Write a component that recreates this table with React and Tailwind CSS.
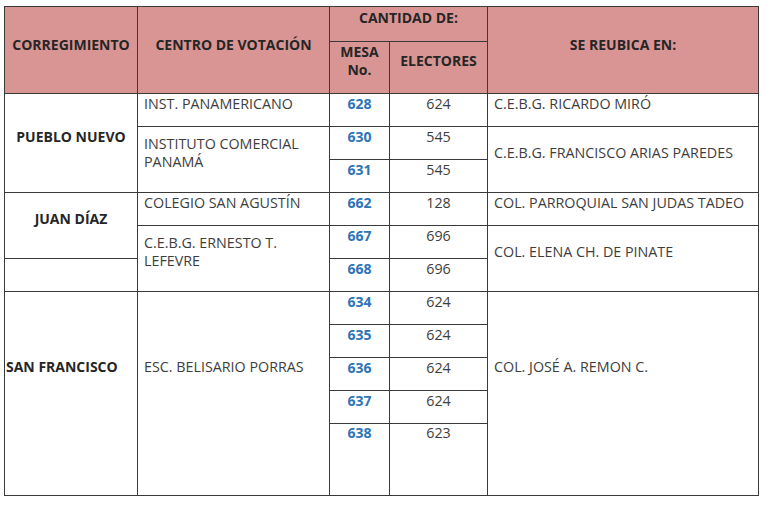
import React from 'react';

const line = "border border-[#3a3a3a]";
const head = `${line} bg-[#d99594] text-[#262626] font-bold text-[14px] text-center align-middle`;
const cell = `${line} align-middle pb-[13px] leading-[18px]`;
const mesa = `${cell} text-center font-bold text-[#2e74b5] text-[14px]`;
const elect = `${cell} text-center`;
const left = `${cell} pl-[6px] pr-[4px]`;

const sanFrancisco = [
  { mesa: 634, electores: 624 },
  { mesa: 635, electores: 624 },
  { mesa: 636, electores: 624 },
  { mesa: 637, electores: 624 },
  { mesa: 638, electores: 623 },
];

export default function App() {
  return (
    <div className="bg-white w-[780px] h-[511px] pt-[6px] pl-[4px] text-[14.3px] text-[#3d3d3d]" style={{ fontFamily: '"Open Sans", "Liberation Sans", sans-serif' }}>
      <table className="border-collapse table-fixed w-[754px]">
        <colgroup>
          <col className="w-[133px]" />
          <col className="w-[192px]" />
          <col className="w-[60px]" />
          <col className="w-[98px]" />
          <col className="w-[271px]" />
        </colgroup>
        <thead>
          <tr className="h-[35px]">
            <th rowSpan={2} className={`${head} pb-[11px]`}>CORREGIMIENTO</th>
            <th rowSpan={2} className={`${head} pb-[11px]`}>CENTRO DE VOTACIÓN</th>
            <th colSpan={2} className={`${head} pb-[13px]`}>CANTIDAD DE:</th>
            <th rowSpan={2} className={`${head} pb-[11px]`}>SE REUBICA EN:</th>
          </tr>
          <tr className="h-[52px]">
            <th className={`${head} pb-[14px] leading-[18px]`}>MESA<br />No.</th>
            <th className={`${head} pb-[14px]`}>ELECTORES</th>
          </tr>
        </thead>
        <tbody>
          <tr className="h-[33px]">
            <td rowSpan={3} className={`${cell} text-center font-bold text-[14px] text-[#262626]`}>PUEBLO NUEVO</td>
            <td className={left}>INST. PANAMERICANO</td>
            <td className={mesa}>628</td>
            <td className={elect}>624</td>
            <td className={left}>C.E.B.G. RICARDO MIRÓ</td>
          </tr>
          <tr className="h-[33px]">
            <td rowSpan={2} className={left}>INSTITUTO COMERCIAL<br />PANAMÁ</td>
            <td className={mesa}>630</td>
            <td className={elect}>545</td>
            <td rowSpan={2} className={left}>C.E.B.G. FRANCISCO ARIAS PAREDES</td>
          </tr>
          <tr className="h-[33px]">
            <td className={mesa}>631</td>
            <td className={elect}>545</td>
          </tr>
          <tr className="h-[33px]">
            <td rowSpan={2} className={`${cell} text-center font-bold text-[14px] text-[#262626]`}>JUAN DÍAZ</td>
            <td className={left}>COLEGIO SAN AGUSTÍN</td>
            <td className={mesa}>662</td>
            <td className={elect}>128</td>
            <td className={left}>COL. PARROQUIAL SAN JUDAS TADEO</td>
          </tr>
          <tr className="h-[33px]">
            <td rowSpan={2} className={left}>C.E.B.G. ERNESTO T.<br />LEFEVRE</td>
            <td className={mesa}>667</td>
            <td className={elect}>696</td>
            <td rowSpan={2} className={left}>COL. ELENA CH. DE PINATE</td>
          </tr>
          <tr className="h-[33px]">
            <td className={cell}></td>
            <td className={mesa}>668</td>
            <td className={elect}>696</td>
          </tr>
          {sanFrancisco.map((row, i) => {
            const last = i === sanFrancisco.length - 1;
            return (
              <tr key={row.mesa} className={last ? "h-[71px]" : "h-[33px]"}>
                {i === 0 && (
                  <>
                    <td rowSpan={5} className={`${line} align-middle pb-[54px] pl-[1px] font-bold text-[14px] text-[#262626] whitespace-nowrap`}>SAN FRANCISCO</td>
                    <td rowSpan={5} className={`${line} align-middle pb-[54px] pl-[6px]`}>ESC. BELISARIO PORRAS</td>
                  </>
                )}
                <td className={`${mesa} ${last ? "pb-[53px]" : ""}`}>{row.mesa}</td>
                <td className={`${elect} ${last ? "pb-[53px]" : ""}`}>{row.electores}</td>
                {i === 0 && (
                  <td rowSpan={5} className={`${line} align-middle pb-[54px] pl-[6px]`}>COL. JOSÉ A. REMON C.</td>
                )}
              </tr>
            );
          })}
        </tbody>
      </table>
    </div>
  );
}
